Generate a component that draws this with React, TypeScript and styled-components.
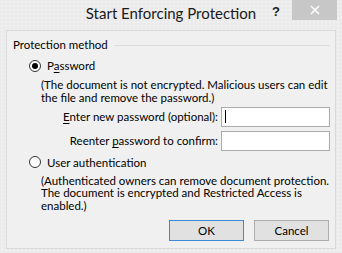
import styled, { createGlobalStyle } from "styled-components"

const GlobalStyle = createGlobalStyle`
  html, body {
    margin: 0;
    padding: 0;
    background: #ebebeb;
  }
  body {
    font-family: "Lato", "Noto Sans", sans-serif;
    color: #000;
  }
`

const Window = styled.div`
  width: 342px;
  height: 253px;
  box-sizing: border-box;
  background-color: #ebebeb;
  background-image: radial-gradient(#f7f7f7 0.6px, transparent 0.8px);
  background-size: 4px 4px;
  display: flex;
  flex-direction: column;
`

const TitleBar = styled.div`
  height: 30px;
  flex-shrink: 0;
  position: relative;
  display: flex;
  justify-content: center;
  align-items: flex-start;
`

const Title = styled.div`
  font-size: 15px;
  line-height: 15px;
  padding-top: 6px;
  color: #1a1a1a;
`

const TitleButtons = styled.div`
  position: absolute;
  top: 0;
  right: 5px;
  display: flex;
  align-items: flex-start;
`

const HelpButton = styled.div`
  width: 16px;
  margin-right: 8px;
  padding-top: 5px;
  font-family: "Liberation Sans", sans-serif;
  font-size: 13px;
  font-weight: bold;
  line-height: 13px;
  color: #222;
  text-align: center;
`

const CloseButton = styled.div`
  width: 45px;
  height: 20px;
  background: #c7c7c7;
  display: flex;
  align-items: center;
  justify-content: center;
`

const Panel = styled.div`
  margin: 0 6px 4px 6px;
  flex: 1;
  border: 1px solid #d9d9d9;
  background: #f0f0f0;
  padding: 7px 5px 0 6px;
  font-size: 11.5px;
  line-height: 13px;
`

const Legend = styled.div`
  display: flex;
  align-items: center;
  gap: 6px;
  height: 13px;
  &::after {
    content: "";
    flex: 1;
    height: 1px;
    margin-top: 1px;
    background: #dcdcdc;
  }
`

const OptionRow = styled.div<{ top: number }>`
  display: flex;
  align-items: center;
  gap: 6px;
  height: 13px;
  margin-top: ${props => props.top}px;
  padding-left: 16px;
`

const Radio = styled.span<{ checked?: boolean }>`
  width: 12px;
  height: 12px;
  box-sizing: border-box;
  border-radius: 50%;
  border: 1px solid #333;
  background: #fff;
  display: flex;
  align-items: center;
  justify-content: center;
  &::after {
    content: "";
    width: 6px;
    height: 6px;
    border-radius: 50%;
    background: ${props => (props.checked ? "#000" : "transparent")};
  }
`

const Note = styled.div<{ top: number }>`
  margin-top: ${props => props.top}px;
  padding-left: 28px;
  line-height: 12.8px;
`

const FieldRow = styled.div<{ top: number }>`
  display: flex;
  justify-content: flex-end;
  align-items: center;
  gap: 3px;
  margin-top: ${props => props.top}px;
`

const TextBox = styled.div<{ focused?: boolean }>`
  width: 109px;
  height: 20px;
  flex-shrink: 0;
  box-sizing: border-box;
  background: #fff;
  border: 1px solid #acacac;
  display: flex;
  align-items: center;
  padding-left: 3px;
  &::before {
    content: "";
    width: 1px;
    height: 13px;
    background: ${props => (props.focused ? "#000" : "transparent")};
  }
`

const ButtonRow = styled.div`
  display: flex;
  justify-content: flex-end;
  gap: 10px;
  margin-top: 7px;
  padding-right: 1px;
`

const Button = styled.div<{ primary?: boolean }>`
  width: 75px;
  height: 21px;
  box-sizing: border-box;
  display: flex;
  align-items: center;
  justify-content: center;
  background: #e1e1e1;
  border: 1px solid ${props => (props.primary ? "#3a8ad8" : "#adadad")};
`

const U = styled.span`
  text-decoration: underline;
  text-underline-offset: 2px;
`

export default function App() {
  return (
    <>
      <GlobalStyle />
      <Window>
        <TitleBar>
          <Title>Start Enforcing Protection</Title>
          <TitleButtons>
            <HelpButton>?</HelpButton>
            <CloseButton>
              <svg width="10" height="10" viewBox="0 0 10 10">
                <path d="M1 1 L9 9 M9 1 L1 9" stroke="#fff" strokeWidth="1.5" />
              </svg>
            </CloseButton>
          </TitleButtons>
        </TitleBar>
        <Panel>
          <Legend>Protection method</Legend>
          <OptionRow top={8}>
            <Radio checked />
            <span>
              P<U>a</U>ssword
            </span>
          </OptionRow>
          <Note top={7}>
            (The document is not encrypted. Malicious users can edit the file and remove the password.)
          </Note>
          <FieldRow top={2}>
            <span>
              <U>E</U>nter new password (optional):
            </span>
            <TextBox focused />
          </FieldRow>
          <FieldRow top={4}>
            <span>
              Reenter <U>p</U>assword to confirm:
            </span>
            <TextBox />
          </FieldRow>
          <OptionRow top={5}>
            <Radio />
            <span>
              User authent<U>i</U>cation
            </span>
          </OptionRow>
          <Note top={6}>
            (Authenticated owners can remove document protection. The document is encrypted and Restricted Access is enabled.)
          </Note>
          <ButtonRow>
            <Button primary>OK</Button>
            <Button>Cancel</Button>
          </ButtonRow>
        </Panel>
      </Window>
    </>
  )
}
